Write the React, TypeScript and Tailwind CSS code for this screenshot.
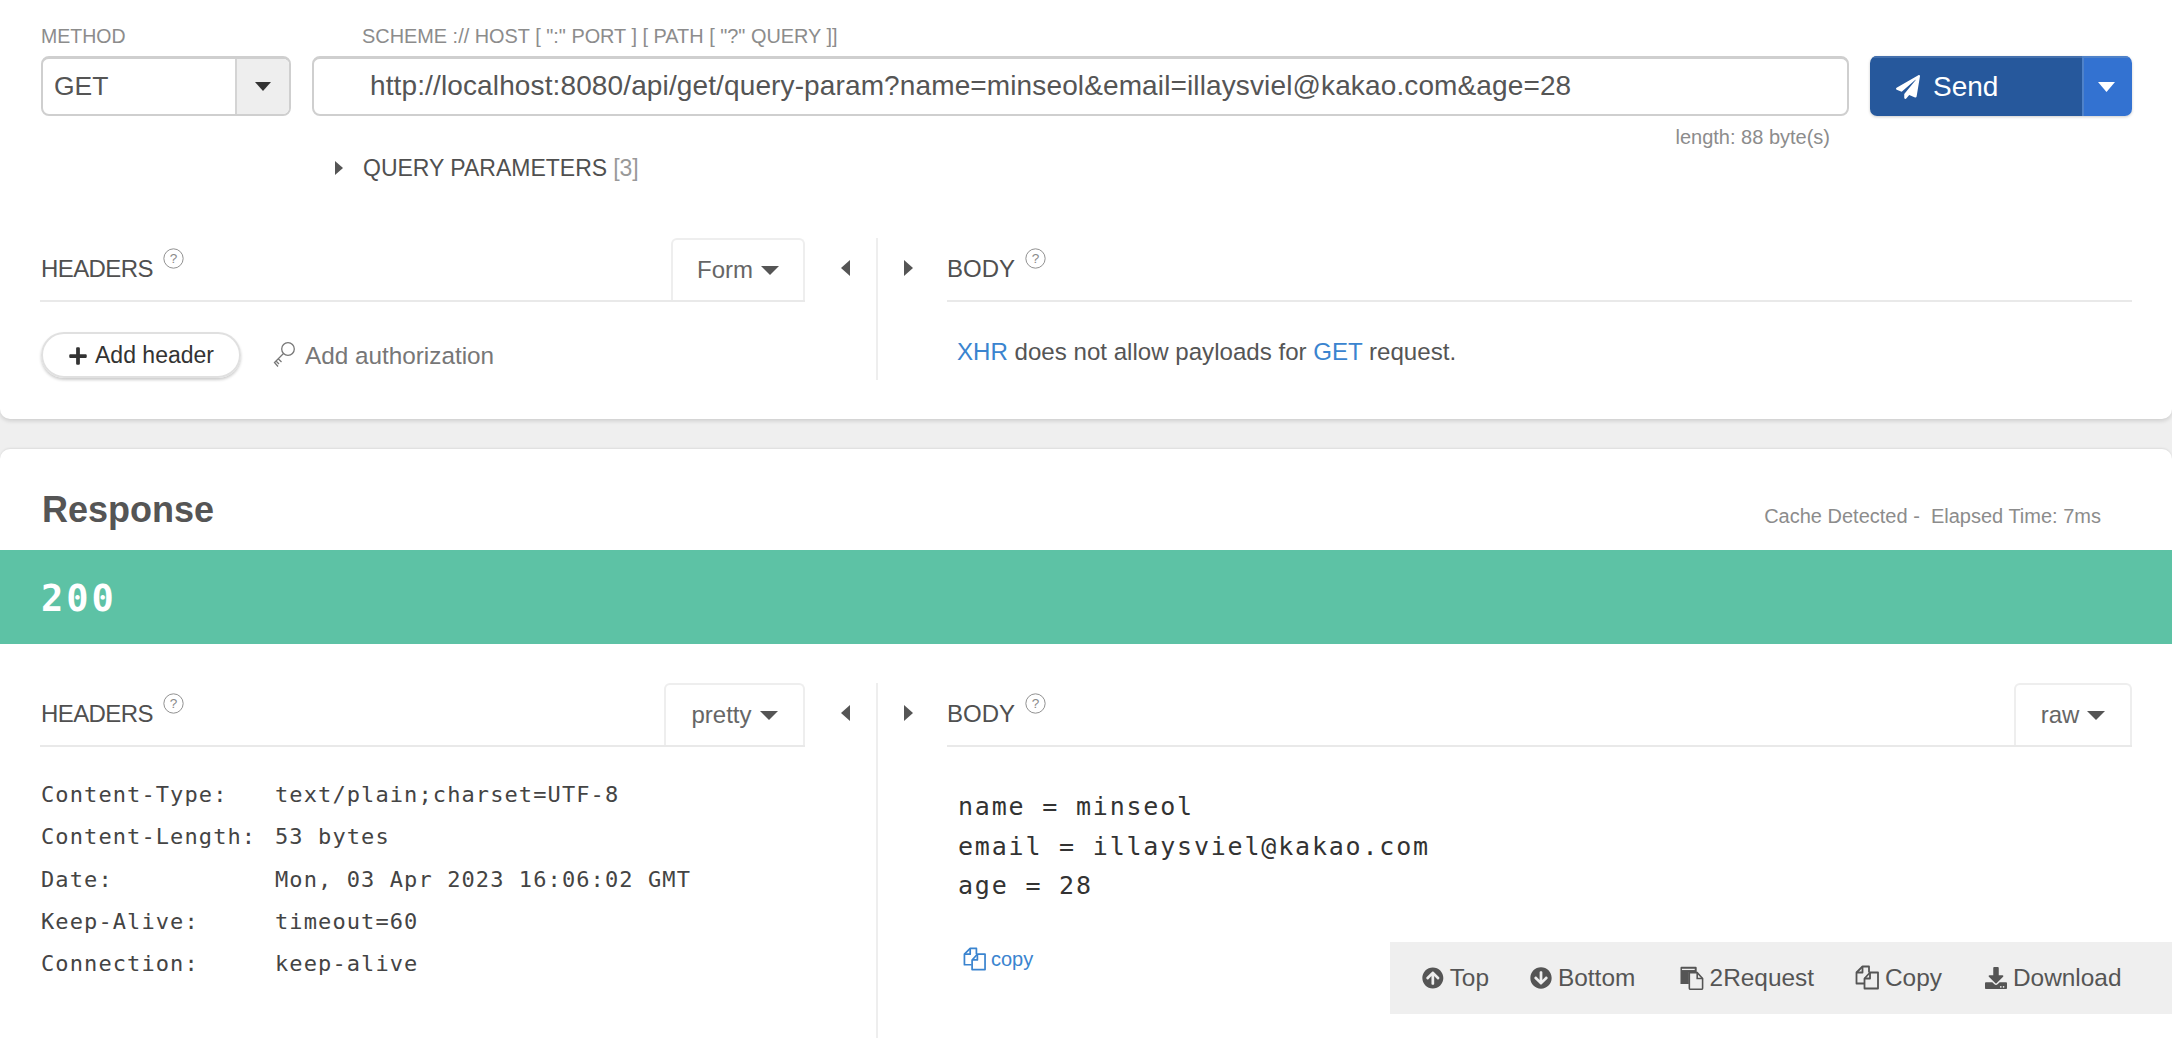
import React from 'react';
import { FaArrowCircleDown, FaArrowCircleUp, FaDownload, FaPaperPlane, FaPlus } from 'react-icons/fa';

const Tri = ({ dir, className }: { dir: 'down' | 'left' | 'right'; className?: string }) => {
  const pts = dir === 'down' ? '0,0 12,0 6,7' : dir === 'left' ? '8,0 8,14 0,7' : '0,0 8,7 0,14';
  const box = dir === 'down' ? '0 0 12 7' : '0 0 8 14';
  return (
    <svg viewBox={box} className={className} fill="currentColor" preserveAspectRatio="none">
      <polygon points={pts} />
    </svg>
  );
};

const Help = () => (
  <svg viewBox="0 0 20 20" className="w-[21px] h-[21px] text-[#8a8a8a]">
    <circle cx="10" cy="10" r="9.2" fill="none" stroke="currentColor" strokeWidth="0.9" />
    <text x="10" y="14.5" textAnchor="middle" fontSize="13" fill="currentColor" fontFamily="Liberation Sans, sans-serif">?</text>
  </svg>
);

const CopyIcon = ({ className }: { className?: string }) => (
  <svg viewBox="0 0 24 25" className={className} fill="none" stroke="currentColor" strokeWidth="1.8" strokeLinejoin="round">
    <path d="M9 18.5 H1.5 V7.5 L7.5 1.5 H14 V7.5" />
    <path d="M7.5 1.5 V7.5 H1.5" />
    <path d="M15 7.5 H23 V23.5 H9.5 V13.5 Z" />
    <path d="M15 7.5 V13.5 H9.5" />
  </svg>
);

const PasteIcon = ({ className }: { className?: string }) => (
  <svg viewBox="0 0 24 24" className={className}>
    <path d="M1.5 0.5 H16 Q17 0.5 17 1.5 V6 H9 V18 H0.5 V1.5 Q0.5 0.5 1.5 0.5 Z" fill="currentColor" />
    <path d="M9.5 6.5 H17.5 L23 12.5 V22.5 Q23 23.5 22 23.5 H10.5 Q9.5 23.5 9.5 22.5 Z" fill="#efefef" stroke="currentColor" strokeWidth="1.6" />
    <path d="M17.5 6.5 V12.5 H23" fill="none" stroke="currentColor" strokeWidth="1.6" />
    <rect x="2" y="2.6" width="13" height="1.3" fill="#efefef" />
  </svg>
);

const KeyIcon = ({ className }: { className?: string }) => (
  <svg viewBox="0 0 22 28" className={className} fill="none" stroke="currentColor" strokeWidth="1.3">
    <circle cx="15" cy="8" r="6.3" />
    <path d="M10.5 12.5 L1.5 21.5 L5 25.5 M5.2 17.8 L8.5 21 M3 20 L6 23" />
  </svg>
);

const SectionHead = ({ title, tab, tabW, titleClass }: { title: string; tab?: string; tabW?: string; titleClass?: string }) => (
  <div className="flex items-start justify-between h-[64px] border-b-2 border-[#e9e9e9]">
    <div className="flex items-start pt-[17px]">
      <span className={`text-[24px] leading-[28px] text-[#505050] ${titleClass ?? ''}`}>{title}</span>
      <span className="ml-[10px] -mt-[7px]">
        <Help />
      </span>
    </div>
    {tab && (
      <div className={`${tabW} h-[62px] flex items-center justify-center gap-2 border-2 border-b-0 border-[#eeeeee] rounded-t-[6px] text-[24px] text-[#666666]`}>
        <span>{tab}</span>
        <Tri dir="down" className="w-[18px] h-[9px] text-[#555555]" />
      </div>
    )}
  </div>
);

const Split = ({ left, right, h }: { left: React.ReactNode; right: React.ReactNode; h: string }) => (
  <div className={`flex ${h}`}>
    <div className="w-[765px] ml-[40px]">{left}</div>
    <div className="w-[73px] border-r-2 border-[#eeeeee] pl-[36px] pt-[22px]">
      <Tri dir="left" className="w-[9px] h-[16px] text-[#555555]" />
    </div>
    <div className="w-[69px] pl-[26px] pt-[22px]">
      <Tri dir="right" className="w-[9px] h-[16px] text-[#555555]" />
    </div>
    <div className="w-[1185px]">{right}</div>
  </div>
);

const resHeaders = [
  ['Content-Type:', 'text/plain;charset=UTF-8'],
  ['Content-Length:', '53 bytes'],
  ['Date:', 'Mon, 03 Apr 2023 16:06:02 GMT'],
  ['Keep-Alive:', 'timeout=60'],
  ['Connection:', 'keep-alive'],
];

const tools = [
  { label: 'Top', icon: <FaArrowCircleUp className="w-[22px] h-[22px]" />, w: 'w-[67px]' },
  { label: 'Bottom', icon: <FaArrowCircleDown className="w-[22px] h-[22px]" />, w: 'w-[109px]' },
  { label: '2Request', icon: <PasteIcon className="w-[24px] h-[24px]" />, w: 'w-[134px]' },
  { label: 'Copy', icon: <CopyIcon className="w-[24px] h-[25px]" />, w: 'w-[89px]' },
  { label: 'Download', icon: <FaDownload className="w-[22px] h-[22px]" />, w: 'w-[137px]' },
];

export default function App() {
  return (
    <div className="relative h-[1038px] overflow-hidden bg-[#efefef] font-['Liberation_Sans',Arial,sans-serif] text-[#555555]">
      {/* request */}
      <section className="h-[419px] bg-white rounded-b-[10px] shadow-[0_2px_4px_rgba(0,0,0,0.14)]">
        <div className="grid grid-cols-[250px_1537px_262px] gap-x-[21px] pl-[41px] pt-[26px]">
          <div className="text-[19.5px] leading-[20px] text-[#8c8c8c] mb-[10px]">METHOD</div>
          <div className="text-[19.9px] leading-[20px] text-[#8c8c8c] mb-[10px] pl-[50px]">SCHEME :// HOST [ ":" PORT ] [ PATH [ "?" QUERY ]]</div>
          <div />

          <div className="flex h-[60px] rounded-[8px] border-2 border-[#cfcfcf] border-t-[3px] overflow-hidden">
            <div className="flex-1 pl-[11px] text-[26.5px] leading-[54px] text-[#555555]">GET</div>
            <div className="w-[54px] bg-[#eeeeee] border-l-2 border-[#d4d4d4] flex items-center justify-center">
              <Tri dir="down" className="w-[16px] h-[9px] text-[#333333]" />
            </div>
          </div>
          <div className="h-[60px] rounded-[8px] border-2 border-[#cfcfcf] border-t-[3px] pl-[56px] text-[28px] tracking-[0.125px] leading-[54px] text-[#555555] whitespace-nowrap">
            http://localhost:8080/api/get/query-param?name=minseol&email=illaysviel@kakao.com&age=28
          </div>
          <div className="flex h-[60px] rounded-[7px] overflow-hidden shadow-[0_1px_3px_rgba(0,0,0,0.2)] text-white">
            <div className="flex-1 bg-[#26589c] border-t-2 border-[#4470ad] flex items-center pl-[26px] gap-[13px]">
              <FaPaperPlane className="w-[24px] h-[24px]" />
              <span className="text-[28px]">Send</span>
            </div>
            <div className="w-[50px] bg-[#3372d1] border-l-2 border-t-2 border-[#4f82c9] flex items-center justify-center pr-[4px]">
              <Tri dir="down" className="w-[17px] h-[10px] text-white" />
            </div>
          </div>

          <div />
          <div className="text-right pr-[19px] pt-[11px] text-[20px] leading-[20px] text-[#8c8c8c]">length: 88 byte(s)</div>
          <div />
        </div>

        <div className="flex items-center pl-[335px] mt-[9px] h-[24px] mb-[58px]">
          <Tri dir="right" className="w-[8px] h-[14px] text-[#555555]" />
          <span className="ml-[20px] text-[23px] text-[#505050]">QUERY PARAMETERS</span>
          <span className="ml-[6px] text-[23px] text-[#999999]">[3]</span>
        </div>

        <Split
          h="h-[142px]"
          left={
            <>
              <SectionHead title="HEADERS" tab="Form" tabW="w-[134px]" titleClass="ml-[1px] tracking-[-0.6px]" />
              <div className="flex items-center mt-[30px]">
                <div className="ml-[1px] w-[200px] h-[46px] pt-[1px] rounded-full border-2 border-[#e0e0e0] shadow-[0_2px_3px_rgba(0,0,0,0.2)] flex items-center justify-center gap-[7px] text-[23px] text-[#333333]">
                  <FaPlus className="w-[20px] h-[20px]" />
                  <span>Add header</span>
                </div>
                <KeyIcon className="ml-[32px] w-[22px] h-[28px] text-[#777777]" />
                <span className="ml-[10px] mt-[2px] text-[24.3px] text-[#777777]">Add authorization</span>
              </div>
            </>
          }
          right={
            <>
              <SectionHead title="BODY" />
              <div className="mt-[36px] pl-[10px] text-[24.1px] leading-[28px] text-[#555555]">
                <span className="text-[#3a84cf]">XHR</span> does not allow payloads for <span className="text-[#3a84cf]">GET</span> request.
              </div>
            </>
          }
        />
      </section>

      {/* response */}
      <section className="mt-[30px] h-[600px] bg-white rounded-t-[10px] shadow-[0_-1px_2px_rgba(0,0,0,0.08)]">
        <div className="h-[101px] flex justify-between pl-[42px] pr-[71px]">
          <h2 className="pt-[40px] text-[36px] leading-[42px] font-bold text-[#555555]">Response</h2>
          <div className="pt-[56px] text-[20px] leading-[22px] text-[#8c8c8c]">Cache Detected -&nbsp; Elapsed Time: 7ms</div>
        </div>
        <div className="h-[94px] bg-[#5dc2a5] pl-[41px] pt-[3px] flex items-center font-['DejaVu_Sans_Mono',monospace] font-bold text-[37px] text-white tracking-[3px]">200</div>
        <div className="pt-[39px]">
          <Split
            h="h-[400px]"
            left={
              <>
                <SectionHead title="HEADERS" tab="pretty" tabW="w-[141px]" titleClass="ml-[1px] tracking-[-0.6px]" />
                <div className="mt-[27px] ml-[1px] font-['DejaVu_Sans_Mono',monospace] text-[22px] leading-[42.3px] tracking-[1.1px] text-[#444444]">
                  {resHeaders.map(([k, v]) => (
                    <div key={k} className="flex whitespace-nowrap">
                      <span className="w-[234px]">{k}</span>
                      <span>{v}</span>
                    </div>
                  ))}
                </div>
              </>
            }
            right={
              <>
                <div className="relative">
                  <SectionHead title="BODY" tab="raw" tabW="w-[118px]" />
                </div>
                <div className="mt-[40px] pl-[11px] font-['DejaVu_Sans_Mono',monospace] text-[25px] leading-[39.5px] tracking-[1.8px] text-[#333333]">
                  <div>name = minseol</div>
                  <div>email = illaysviel@kakao.com</div>
                  <div>age = 28</div>
                </div>
                <div className="mt-[38px] pl-[16px] flex items-center gap-[5px] text-[20px] text-[#3a84cf]">
                  <CopyIcon className="w-[23px] h-[24px]" />
                  <span>copy</span>
                </div>
              </>
            }
          />
        </div>
      </section>

      {/* floating toolbar */}
      <div className="absolute left-[1390px] right-0 top-[942px] h-[72px] bg-[#efefef] pl-[32px] flex items-center text-[24.4px] text-[#555555]">
        {tools.map(t => (
          <div key={t.label} className={`flex items-center gap-[6px] ${t.w} mr-[41px] last:mr-0 whitespace-nowrap`}>
            {t.icon}
            <span>{t.label}</span>
          </div>
        ))}
      </div>
    </div>
  );
}
